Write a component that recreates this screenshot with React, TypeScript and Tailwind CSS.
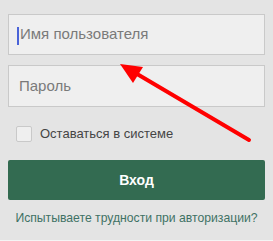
import { useState } from "react";

export default function App() {
  const [remember, setRemember] = useState(false);

  return (
    <div className="relative w-[273px] h-[241px] bg-[#e4e4e4] font-['Helvetica','Liberation_Sans',Arial,sans-serif] overflow-hidden">
      <div className="flex flex-col px-2 pt-[14px]">
        {/* Username */}
        <div className="relative h-[41px] bg-[#efefef] border border-[#c9c9c9] flex items-center pl-[10px]">
          <span className="absolute left-[8px] top-[12px] w-[2px] h-[18px] bg-[#4a63d8]" />
          <span className="text-[15px] text-[#7a7a7a] ml-[1px]">Имя пользователя</span>
        </div>

        {/* Password */}
        <div className="mt-[10px] h-[42px] bg-[#efefef] border border-[#c9c9c9] flex items-center pl-[10px]">
          <span className="text-[15px] text-[#7a7a7a]">Пароль</span>
        </div>

        {/* Remember me */}
        <label className="mt-[17px] ml-2 h-5 flex items-center gap-2 cursor-pointer">
          <span
            onClick={() => setRemember(!remember)}
            className="w-4 h-4 bg-[#efefef] border border-[#c9c9c9] rounded-[2px]"
          />
          <span className="text-[13px] text-[#444]">Оставаться в системе</span>
        </label>

        {/* Submit */}
        <button className="mt-[16px] h-[40px] w-full rounded-[2px] bg-[#336b51] text-white text-[14px] font-bold">
          Вход
        </button>

        <p className="mt-[8px] text-center text-[12.2px] leading-5 whitespace-nowrap text-[#3f7265]">
          Испытываете трудности при авторизации?
        </p>
      </div>

      <div className="absolute left-0 bottom-0 w-full h-px bg-[#f4f4f4]" />

      {/* Red arrow overlay */}
      <svg className="absolute left-0 top-0" width="273" height="241" viewBox="0 0 273 241">
        <line x1="249" y1="140" x2="132" y2="71" stroke="#ff0000" strokeWidth="4" strokeLinecap="round" />
        <polygon points="120,64 143,67 133,83" fill="#ff0000" />
      </svg>
    </div>
  );
}
